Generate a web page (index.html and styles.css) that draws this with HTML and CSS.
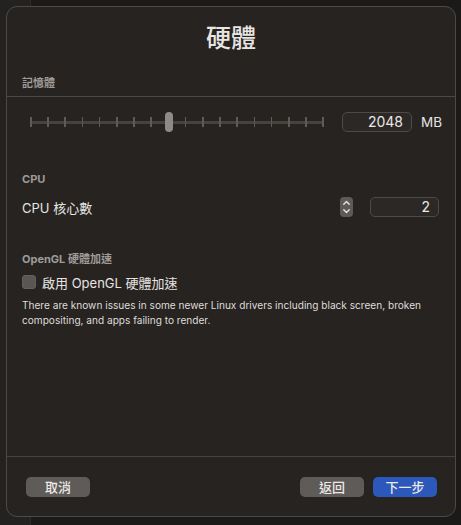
FILE: index.html
```html
<!DOCTYPE html>
<html lang="zh-Hant">
<head>
<meta charset="utf-8">
<title>硬體</title>
<link rel="stylesheet" href="styles.css">
</head>
<body>
<div class="backdrop">
  <div class="side"></div>
  <div class="main"></div>
</div>
<div class="sheet">
  <div class="content">
    <h1 class="title">硬體</h1>
    <div class="section-label">記憶體</div>
    <div class="divider"></div>
    <div class="mem-row">
      <div class="slider">
        <div class="track"></div>
        <div class="ticks">
          <span></span><span></span><span></span><span></span><span></span><span></span>
          <span></span><span></span><span></span><span></span><span></span><span></span>
          <span></span><span></span><span></span><span></span><span></span><span></span>
        </div>
        <div class="thumb"></div>
      </div>
      <div class="field mem-field">2048</div>
      <div class="unit">MB</div>
    </div>

    <div class="section-label cpu-label">CPU</div>
    <div class="cpu-row">
      <div class="row-label">CPU 核心數</div>
      <div class="stepper">
        <svg width="13" height="20" viewBox="0 0 13 20">
          <path d="M3.8 7.2 L6.5 4.6 L9.2 7.2" fill="none" stroke="#e6e4e2" stroke-width="1.4" stroke-linecap="round" stroke-linejoin="round"/>
          <path d="M3.8 12.8 L6.5 15.4 L9.2 12.8" fill="none" stroke="#e6e4e2" stroke-width="1.4" stroke-linecap="round" stroke-linejoin="round"/>
        </svg>
      </div>
      <div class="field cpu-field">2</div>
    </div>

    <div class="section-label gl-label">OpenGL 硬體加速</div>
    <label class="check-row">
      <span class="checkbox"></span>
      <span class="check-text">啟用 OpenGL 硬體加速</span>
    </label>
    <p class="note">There are known issues in some newer Linux drivers including black screen, broken compositing, and apps failing to render.</p>
  </div>
  <div class="footer">
    <button class="btn">取消</button>
    <div class="spacer"></div>
    <button class="btn">返回</button>
    <button class="btn primary">下一步</button>
  </div>
</div>
</body>
</html>
```
FILE: styles.css
```css
* { box-sizing: border-box; }
html, body {
  margin: 0;
  padding: 0;
  width: 461px;
  height: 525px;
  overflow: hidden;
}
body {
  font-family: "Inter", "Noto Sans CJK TC", sans-serif;
  background: #1c1b1a;
  position: relative;
}
.backdrop {
  display: flex;
  height: 100%;
}
.side {
  width: 31px;
  background: #232221;
  border-right: 1px solid #2e2d2c;
}
.main {
  flex: 1;
  background: #1b1a19;
}
.sheet {
  position: absolute;
  left: 6px;
  top: 6px;
  width: 450px;
  height: 511px;
  background: #272320;
  border: 1px solid #4c4a48;
  border-radius: 11px;
  display: flex;
  flex-direction: column;
  overflow: hidden;
}
.content {
  flex: 1;
  display: flex;
  flex-direction: column;
}
.title {
  margin: 16px 0 0;
  font-size: 25px;
  line-height: 30px;
  font-weight: 500;
  color: #e8e6e3;
  text-align: center;
}
.section-label {
  font-size: 11px;
  font-weight: 700;
  line-height: 14px;
  color: #9e9b98;
  padding-left: 15px;
  margin-top: 23px;
}
.divider {
  height: 1px;
  background: #4a4745;
  margin-top: 6px;
}
.mem-row {
  display: flex;
  align-items: center;
  height: 20px;
  margin-top: 15px;
  padding-left: 23px;
}
.slider {
  position: relative;
  width: 294px;
  height: 20px;
}
.track {
  position: absolute;
  left: 0;
  right: 0;
  top: 9px;
  height: 3px;
  background: #46433f;
  border-radius: 1px;
}
.ticks {
  position: absolute;
  left: 0;
  right: 0;
  top: 5px;
  height: 10px;
  display: flex;
  justify-content: space-between;
}
.ticks span {
  width: 1.5px;
  height: 10px;
  background: #5e5b58;
}
.thumb {
  position: absolute;
  left: 135px;
  top: 0;
  width: 8px;
  height: 20px;
  border-radius: 4px;
  background: #8d8a87;
}
.field {
  height: 20px;
  border: 1px solid #4d4a47;
  background: #2b2825;
  border-radius: 5px;
  color: #ebe9e6;
  font-size: 14px;
  line-height: 18px;
  text-align: right;
  padding-right: 8px;
}
.mem-field {
  width: 70px;
  margin-left: 18px;
}
.unit {
  margin-left: 9px;
  font-size: 13.5px;
  color: #e6e4e1;
}
.cpu-label {
  margin-top: 40px;
}
.cpu-row {
  display: flex;
  align-items: center;
  height: 20px;
  margin-top: 11px;
  padding-left: 15px;
}
.row-label {
  flex: 1;
  font-size: 13px;
  color: #e6e4e1;
}
.stepper {
  width: 13px;
  height: 20px;
  border-radius: 4px;
  background: #5d5a57;
  display: flex;
}
.cpu-field {
  width: 69px;
  margin-left: 17px;
  margin-right: 16px;
}
.gl-label {
  margin-top: 35px;
}
.check-row {
  display: flex;
  align-items: center;
  gap: 6px;
  padding-left: 15px;
  margin-top: 8px;
  height: 16px;
}
.checkbox {
  width: 14px;
  height: 14px;
  border-radius: 3px;
  background: #595653;
  border: 1px solid #63605d;
}
.check-text {
  font-size: 13px;
  color: #e6e4e1;
}
.note {
  margin: 8px 0 0;
  padding: 0 4px 0 15px;
  font-size: 10.1px;
  line-height: 15px;
  color: #dedcd9;
}
.footer {
  border-top: 1px solid #45423f;
  display: flex;
  align-items: center;
  padding: 20px 18px 19px 19px;
  gap: 9px;
}
.spacer { flex: 1; }
.btn {
  width: 64px;
  height: 20px;
  border: none;
  border-radius: 5px;
  background: #5e5b58;
  color: #ebe9e6;
  font-family: "Inter", "Noto Sans CJK TC", sans-serif;
  font-size: 13px;
  font-weight: 500;
  line-height: 20px;
  padding: 0;
}
.btn.primary {
  background: #2c57bb;
}
```
